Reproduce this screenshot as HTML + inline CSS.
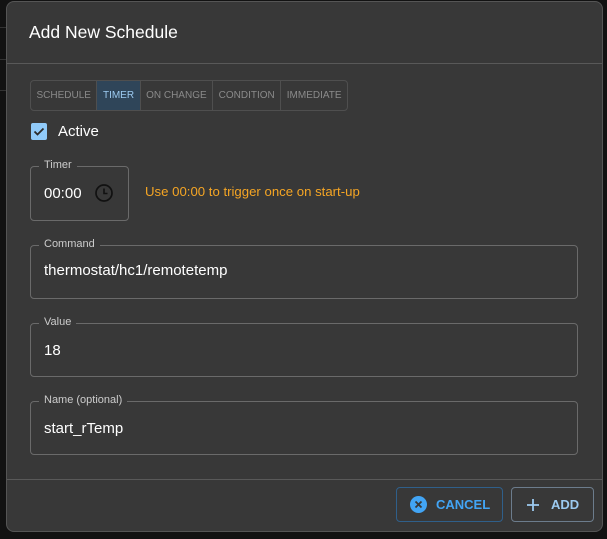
<!DOCTYPE html>
<html><head><style>
*{box-sizing:border-box;margin:0;padding:0}
body{width:607px;height:539px;background:#121212;font-family:"Liberation Sans",Arial,sans-serif;position:relative;overflow:hidden}
.bgl{position:absolute;left:0;width:6px;height:1px;background:#333}
.dlg{position:absolute;left:6px;top:1px;width:597px;height:531px;background:#383838;border:1px solid #555;border-radius:8px;overflow:hidden}
.title{position:absolute;left:22px;top:20px;color:#fff;font-size:17.5px}
.hr{position:absolute;left:0;right:0;height:1px;background:#595959}
.tabs{position:absolute;left:23px;top:78px;height:31px;border:1px solid #4f4f4f;border-radius:4px;display:flex;overflow:hidden}
.tabs div{font-size:10px;color:#8a8a8a;padding:0 5.5px;line-height:29px;border-right:1px solid #4f4f4f}
.tabs div:last-child{border-right:none}
.tabs .on{background:#2f4559;color:#9ccaf0}
.cb{position:absolute;left:24px;top:121px;width:16px;height:17px;background:#90caf9;border-radius:2px}
.lbl{position:absolute;color:#fff}
.field{position:absolute;border:1px solid #6a6a6a;border-radius:4px}
.leg{position:absolute;top:-8px;left:8px;background:#383838;padding:0 5px;font-size:11px;color:#ccc}
.val{position:absolute;left:13px;color:#fff;font-size:15px}
.btn{position:absolute;top:487px;height:35px;border-radius:4px;font-size:13px;font-weight:bold;display:flex;align-items:center}
</style></head><body>
<div class="bgl" style="top:27px"></div><div class="bgl" style="top:59px"></div><div class="bgl" style="top:90px"></div>
<div class="dlg">
<div class="title">Add New Schedule</div>
<div class="hr" style="top:61px"></div>
<div class="tabs"><div>SCHEDULE</div><div class="on">TIMER</div><div>ON CHANGE</div><div>CONDITION</div><div>IMMEDIATE</div></div>
<div class="cb"><svg width="16" height="17" viewBox="0 0 16 17"><path d="M3.5 8.5l3 3 6-6" stroke="#2a2a2a" stroke-width="1.8" fill="none"/></svg></div>
<div class="lbl" style="left:51px;top:121px;font-size:15px">Active</div>
<div class="field" style="left:23px;top:164px;width:99px;height:55px"><span class="leg">Timer</span><span class="val" style="top:18px">00:00</span>
<svg style="position:absolute;left:63px;top:16px" width="20" height="20" viewBox="0 0 20 20"><circle cx="10" cy="10" r="8" stroke="#111" stroke-width="1.7" fill="none"/><path d="M10 5.5v5h3.5" stroke="#111" stroke-width="1.6" fill="none"/></svg></div>
<div class="lbl" style="left:138px;top:182px;font-size:13.2px;color:#f5a524">Use 00:00 to trigger once on start-up</div>
<div class="field" style="left:23px;top:243px;width:548px;height:54px"><span class="leg">Command</span><span class="val" style="top:16px">thermostat/hc1/remotetemp</span></div>
<div class="field" style="left:23px;top:321px;width:548px;height:54px"><span class="leg">Value</span><span class="val" style="top:18px">18</span></div>
<div class="field" style="left:23px;top:399px;width:548px;height:54px"><span class="leg">Name (optional)</span><span class="val" style="top:18px">start_rTemp</span></div>
<div class="hr" style="top:477px"></div>
</div>
<div class="btn" style="left:396px;width:107px;border:1px solid #2f5f8a;color:#42a5f5">
<svg style="margin-left:13px;margin-right:9px" width="17" height="17" viewBox="0 0 17 17"><circle cx="8.5" cy="8.5" r="8.5" fill="#42a5f5"/><path d="M5.5 5.5l6 6M11.5 5.5l-6 6" stroke="#383838" stroke-width="1.8"/></svg>CANCEL</div>
<div class="btn" style="left:511px;width:83px;border:1px solid #6c7c8c;color:#9ccaf0">
<svg style="margin-left:14px;margin-right:11px" width="14" height="14" viewBox="0 0 14 14"><path d="M7 1v12M1 7h12" stroke="#9ccaf0" stroke-width="1.8"/></svg>ADD</div>
</body></html>
